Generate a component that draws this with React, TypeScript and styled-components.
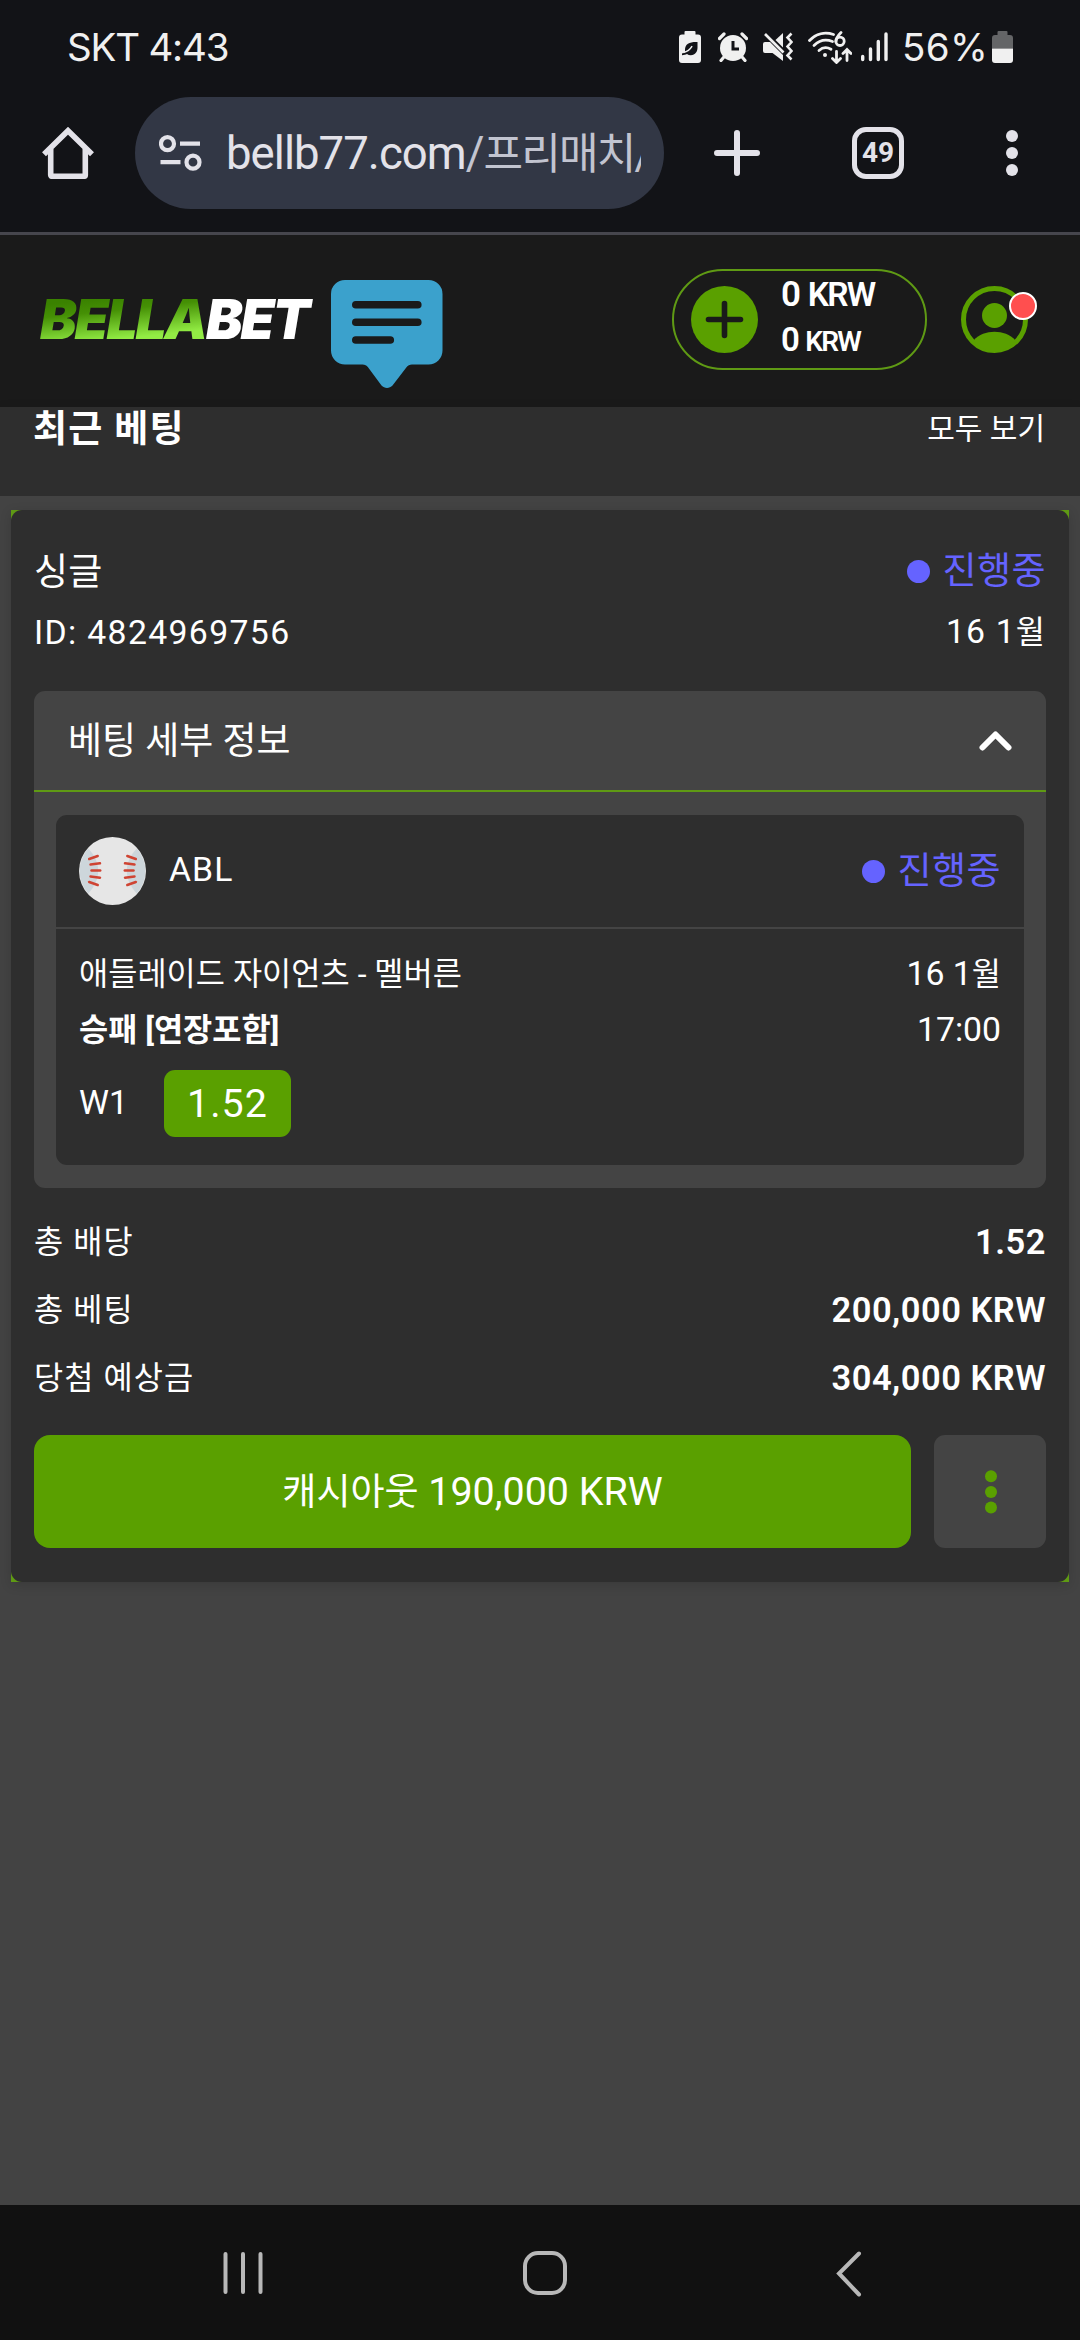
import React from "react";
import styled, { createGlobalStyle } from "styled-components";

const GREEN = "#5aa000";
const PANEL = "#2e2e2e";
const PANEL_LIGHT = "#444444";
const VIOLET = "#6563ff";

const GlobalStyle = createGlobalStyle`
  * { box-sizing: border-box; }
  body {
    margin: 0;
    background: #444444;
    color: #ffffff;
    font-family: Roboto, "Noto Sans CJK KR", sans-serif;
    font-size: 33.75px;
  }
  svg { display: block; flex: none; }
`;

const Screen = styled.div`
  width: 1080px;
  height: 2340px;
  display: flex;
  flex-direction: column;
  overflow: hidden;
`;

const Text = styled.span<{
  $size?: number;
  $track?: number;
  $weight?: number;
  $color?: string;
  $drop?: number;
}>`
  display: block;
  white-space: pre;
  padding-top: ${(p) => p.$drop ?? 0}px;
  font-size: ${(p) => p.$size ?? 33.75}px;
  letter-spacing: ${(p) => p.$track ?? 0}px;
  font-weight: ${(p) => p.$weight ?? 400};
  color: ${(p) => p.$color ?? "#ffffff"};
  line-height: 44px;
`;

const Ko = styled.span`
  font-size: 0.94em;
`;

/* ---------- phone status bar ---------- */

const StatusBar = styled.div`
  height: 94px;
  flex: none;
  display: flex;
  align-items: center;
  padding: 0 67px 0 67px;
  background: #121317;
`;

const StatusText = styled.span<{ $track: number }>`
  font-family: Inter, sans-serif;
  font-size: 38.5px;
  line-height: 46px;
  letter-spacing: ${(p) => p.$track}px;
  color: #f0f0f0;
  white-space: pre;
`;

const StatusIcons = styled.div`
  margin-left: auto;
  display: flex;
  align-items: center;
`;

const Spacer = styled.div<{ $w: number }>`
  width: ${(p) => p.$w}px;
  flex: none;
`;

/* ---------- browser toolbar ---------- */

const Toolbar = styled.div`
  height: 141px;
  flex: none;
  display: flex;
  align-items: flex-start;
  padding: 3px 0 0 42px;
  background: #121317;
  border-bottom: 3px solid #46464d;
`;

const ToolbarSlot = styled.div<{ $gap: number }>`
  height: 112px;
  display: flex;
  align-items: center;
  margin-left: ${(p) => p.$gap}px;
`;

const AddressPill = styled.div`
  width: 529px;
  height: 112px;
  margin-left: 41px;
  padding: 0 23px 0 24px;
  border-radius: 56px;
  background: #323745;
  display: flex;
  align-items: center;
`;

const Url = styled.div`
  flex: 1;
  margin-left: 24px;
  padding-top: 1px;
  overflow: hidden;
  white-space: pre;
  font-size: 45.5px;
  line-height: 60px;
  letter-spacing: -0.95px;
  color: #e3e2e9;
`;

const UrlPath = styled.span`
  color: #c2c4d0;
`;

const UrlHangul = styled.span`
  font-size: 43px;
  letter-spacing: -1.8px;
`;

const TabCount = styled.div`
  width: 52px;
  height: 52px;
  border: 5px solid #e3e2e9;
  border-radius: 14px;
  display: flex;
  align-items: center;
  justify-content: center;
  font-size: 28px;
  line-height: 30px;
  font-weight: 700;
  color: #e3e2e9;
`;

/* ---------- site header ---------- */

const SiteHeader = styled.header`
  height: 172px;
  flex: none;
  display: flex;
  padding-left: 40px;
  background: #1a1a1a;
`;

const Logo = styled.div`
  width: 291px;
  padding-top: 52px;
  display: flex;
  align-items: flex-start;
  font-family: Inter, sans-serif;
  font-size: 55px;
  line-height: 64px;
  font-weight: 900;
  font-style: italic;
  letter-spacing: -2.2px;
  white-space: pre;
`;

const LogoGreen = styled.span`
  background: linear-gradient(174deg, #3a8200 22%, #459005 38%, #92ec44 74%);
  background-clip: text;
  -webkit-background-clip: text;
  color: transparent;
`;

const LogoWhite = styled.span`
  color: #ffffff;
`;

const ChatButton = styled.div`
  padding-top: 45px;
`;

const Balance = styled.div`
  width: 255px;
  height: 101px;
  margin: 34px 0 0 229px;
  border: 2px solid #5f9a14;
  border-radius: 51px;
  display: flex;
  padding: 15px 0 0 17px;
`;

const Amounts = styled.div`
  margin: -14px 0 0 23px;
  display: flex;
  flex-direction: column;
`;

const Amount = styled.div<{ $digit: number; $unit: number; $track: number }>`
  height: 45px;
  line-height: 45px;
  font-weight: 600;
  white-space: pre;
  font-size: ${(p) => p.$unit}px;
  letter-spacing: ${(p) => p.$track}px;
  b {
    margin-right: 2px;
    font-weight: 600;
    font-size: ${(p) => p.$digit}px;
  }
`;

const Profile = styled.div`
  position: relative;
  height: 67px;
  margin: 51px 0 0 34px;
`;

const AlertDot = styled.i`
  position: absolute;
  left: 48px;
  top: 6px;
  width: 28px;
  height: 28px;
  border: 2.5px solid #ffffff;
  border-radius: 50%;
  background: #ff4f4f;
`;

/* ---------- recent bets ---------- */

const RecentBar = styled.div`
  height: 89px;
  flex: none;
  display: flex;
  justify-content: space-between;
  padding: 0 35px 0 33px;
  background: ${PANEL};
  box-shadow: 0 3px 11px rgba(0, 0, 0, 0.14);
`;

const Content = styled.main`
  flex: 1;
  padding: 14px 11px 0;
  background: #434343;
`;

const BetFrame = styled.div`
  height: 1072px;
  background: #5f9a14;
  box-shadow: 0 3px 11px rgba(0, 0, 0, 0.14);
`;

const BetCard = styled.div`
  height: 100%;
  padding: 38px 23px 0;
  border-radius: 11px;
  background: ${PANEL};
  display: flex;
  flex-direction: column;
`;

const Row = styled.div<{ $h: number }>`
  height: ${(p) => p.$h}px;
  flex: none;
  display: flex;
  align-items: center;
  justify-content: space-between;
`;

const Status = styled.div`
  display: flex;
  align-items: center;
  gap: 12px;
`;

const StatusDot = styled.i`
  width: 23px;
  height: 23px;
  border-radius: 50%;
  background: ${VIOLET};
`;

const Details = styled.section`
  height: 497px;
  flex: none;
  margin-top: 21px;
  border-radius: 11px;
  background: ${PANEL_LIGHT};
`;

const DetailsHead = styled.div`
  height: 101px;
  padding: 0 34px 0 34px;
  border-bottom: 2px solid #5f9a14;
  display: flex;
  align-items: center;
  justify-content: space-between;
`;

const Pick = styled.div`
  height: 350px;
  margin: 23px 22px 0;
  border-radius: 11px;
  background: ${PANEL};
`;

const PickHead = styled.div`
  height: 114px;
  padding: 0 23px;
  border-bottom: 2px solid ${PANEL_LIGHT};
  display: flex;
  align-items: center;
`;

const League = styled.div`
  flex: 1;
  margin-left: 23px;
  padding-bottom: 2px;
`;

const PickBody = styled.div`
  padding: 17px 23px 0;
`;

const Outcome = styled.div`
  display: flex;
  align-items: center;
  margin-top: 12px;
`;

const OutcomeName = styled.div`
  width: 85px;
  padding-bottom: 2px;
`;

const Odds = styled.div`
  width: 127px;
  height: 67px;
  border-radius: 11px;
  background: ${GREEN};
  display: flex;
  align-items: center;
  justify-content: center;
`;

const Totals = styled.div`
  margin-top: 20px;
`;

const Actions = styled.div`
  margin-top: 23px;
  display: flex;
  justify-content: space-between;
`;

const CashOut = styled.button`
  width: 877px;
  height: 113px;
  padding: 0;
  border: 0;
  border-radius: 16px;
  background: ${GREEN};
  font-family: inherit;
  display: flex;
  align-items: center;
  justify-content: center;
`;

const MoreButton = styled.button`
  width: 112px;
  height: 113px;
  padding: 0 0 0 2px;
  border: 0;
  border-radius: 11px;
  background: ${PANEL_LIGHT};
  display: flex;
  align-items: center;
  justify-content: center;
`;

/* ---------- system navigation ---------- */

const NavBar = styled.nav`
  height: 135px;
  flex: none;
  padding: 46px 0 0 223px;
  background: #111111;
  display: flex;
`;

/* ---------- icons ---------- */

const INK = "#f0f0f0";

const EcoBattery = () => (
  <svg width="22" height="32" viewBox="0 0 22 32">
    <path d="M6.500 0h9a1 1 0 0 1 1 1v2.500H19a3 3 0 0 1 3 3V29a3 3 0 0 1-3 3H3a3 3 0 0 1-3-3V6.500a3 3 0 0 1 3-3h2.500V1a1 1 0 0 1 1-1z" fill={INK} />
    <path d="M18.500 11c-7.500-.3-12.500 1.500-12.500 8 0 .8.100 1.600.3 2.200L3 22.500v1.700c2 0 3.600-.5 5-1.200 1 .8 2.300 1.200 3.800 1.200 4.600 0 6.700-3.700 6.700-7.700z" fill="#121317" />
    <path d="M4 23.200c4.200-.9 6.800-3.200 8.700-6.400" stroke={INK} strokeWidth="1.500" fill="none" transform="translate(.4 -1.600)" />
  </svg>
);

const Alarm = () => (
  <svg width="30" height="30" viewBox="0 0 30 30">
    <circle cx="15" cy="16" r="13" fill={INK} />
    <path d="M1.500 6.500l4.500-4.500M28.500 6.500l-4.500-4.500M5.500 25.500l-2.500 3M24.500 25.500l2.500 3" stroke={INK} strokeWidth="3.200" strokeLinecap="round" />
    <path d="M15 9v8h6" stroke="#121317" strokeWidth="3" fill="none" />
  </svg>
);

const Mute = () => (
  <svg width="30" height="30" viewBox="0 0 30 30">
    <path d="M0 12a2 2 0 0 1 2-2h5l13 13v6L9.500 21H2a2 2 0 0 1-2-2z" fill={INK} />
    <path d="M20 1v14.500L12.500 8z" fill={INK} />
    <path d="M2 2l18.500 18.500" stroke={INK} strokeWidth="2.600" />
    <path d="M28.500 1.500l-4 4 4 4.500-4 4.500 4 4.500-4 4.500 4 4" stroke={INK} strokeWidth="2.600" fill="none" />
  </svg>
);

const WifiSix = () => (
  <svg width="44" height="33" viewBox="0 0 44 33" fill="none" stroke={INK} strokeWidth="2.800" strokeLinecap="round">
    <path d="M1.500 9.500C8 2.500 17 .5 25.500 3.500" />
    <path d="M6 14.500c5-5 12-6.500 18.500-4" />
    <path d="M11 19.500c3.500-3.200 8-3.600 12-1.200" />
    <circle cx="17" cy="24" r="2" fill={INK} stroke="none" />
    <path d="M33 1.500c-3 3-5 5.500-5 9" />
    <circle cx="32" cy="10.300" r="4.200" />
    <path d="M28.500 20.500v10M24.500 27.500l4 4 4-4" />
    <path d="M39 29.500v-10M35 22.500l4-4 4 4" />
  </svg>
);

const Signal = () => (
  <svg width="27" height="30" viewBox="0 0 27 30" stroke={INK} strokeWidth="3.400" strokeLinecap="round">
    <path d="M1.700 24.500v3M9.500 17v10.500M17.300 9.500v18M25 2v25.500" />
  </svg>
);

const Battery = () => (
  <svg width="21" height="32" viewBox="0 0 21 32">
    <path d="M6.500 0h8a1 1 0 0 1 1 1v3H18a3 3 0 0 1 3 3v10.500H0V7a3 3 0 0 1 3-3h2.500V1a1 1 0 0 1 1-1z" fill="#646567" />
    <path d="M0 17.500h21V29a3 3 0 0 1-3 3H3a3 3 0 0 1-3-3z" fill={INK} />
  </svg>
);

const HomeIcon = () => (
  <svg width="52" height="52" viewBox="0 0 52 52" fill="none" stroke="#e3e2e9" strokeWidth="5.600">
    <path d="M2 27.200L26 3.700l24 23.500" strokeLinejoin="miter" />
    <path d="M8.700 22v26a1.300 1.300 0 0 0 1.300 1.300h32a1.300 1.300 0 0 0 1.300-1.300V22" />
  </svg>
);

const TuneIcon = () => (
  <svg width="43" height="36" viewBox="0 0 43 36" fill="none" stroke="#e3e2e9" strokeWidth="4.200">
    <circle cx="8.500" cy="8.700" r="6.500" />
    <path d="M21 8.700h20M1.500 27.200h20" />
    <circle cx="34" cy="27.200" r="6.500" />
  </svg>
);

const PlusIcon = () => (
  <svg width="46" height="46" viewBox="0 0 46 46" stroke="#e3e2e9" strokeWidth="6" strokeLinecap="round">
    <path d="M23 3v40M3 23h40" />
  </svg>
);

const MenuDots = () => (
  <svg width="12" height="48" viewBox="0 0 12 48" fill="#e3e2e9">
    <circle cx="6" cy="7" r="6" />
    <circle cx="6" cy="24" r="6" />
    <circle cx="6" cy="41" r="6" />
  </svg>
);

const ChatIcon = () => (
  <svg width="112" height="108" viewBox="0 0 112 108">
    <path d="M14 0h83.500a14 14 0 0 1 14 14v56.500a14 14 0 0 1-14 14H81c-2.500 0-4 .8-5.500 2.800L61.500 105.500c-3 3.300-8 3.300-11 0L37 87.300c-1.500-2-3-2.800-5.500-2.800H14a14 14 0 0 1-14-14V14A14 14 0 0 1 14 0z" fill="#3ba1cc" />
    <path d="M24.800 24.800h62M24.800 42.300h62M24.800 60h34.500" stroke="#1a1a1a" strokeWidth="7.600" strokeLinecap="round" />
  </svg>
);

const DepositIcon = () => (
  <svg width="67" height="67" viewBox="0 0 67 67">
    <circle cx="33.500" cy="33.500" r="33.500" fill={GREEN} />
    <path d="M33.500 17.500v32M17.500 33.500h32" stroke="#1a1a1a" strokeWidth="5.600" strokeLinecap="round" />
  </svg>
);

const UserIcon = () => (
  <svg width="67" height="67" viewBox="0 0 67 67">
    <circle cx="33.500" cy="33.500" r="31" fill="none" stroke={GREEN} strokeWidth="5" />
    <circle cx="33.500" cy="29.500" r="12.500" fill={GREEN} />
    <path d="M12.500 54.500C18 48.500 25.500 45.800 33.500 45.800S49 48.500 54.500 54.500C49 61 42 66 33.500 66S18 61 12.500 54.500z" fill={GREEN} />
  </svg>
);

const ChevronUp = () => (
  <svg width="33" height="22" viewBox="0 0 33 22">
    <path d="M3.500 17.500L16.500 4.500l13 13" stroke="#ffffff" strokeWidth="6" strokeLinecap="round" strokeLinejoin="round" fill="none" />
  </svg>
);

const stitches = [
  "M10.200 22l8.500-3",
  "M11.500 27.500l9.500-1.200",
  "M12.500 33.500h8.700",
  "M11.500 39.500l9.500 1.200",
  "M10.200 45l8.500 3",
];

const Seam = () => (
  <>
    <path d="M9.300 11.500C22.500 25.500 22.500 42 9.300 56.500A33.500 33.500 0 0 1 9.300 11.500z" fill="#cdd6db" />
    {stitches.map((d) => (
      <path key={d} d={d} stroke="#cf4433" strokeWidth="2.500" strokeLinecap="round" />
    ))}
  </>
);

const Baseball = () => (
  <svg width="67" height="68" viewBox="0 0 67 68">
    <ellipse cx="33.500" cy="34" rx="33.500" ry="34" fill="#e6e6e6" />
    <Seam />
    <g transform="translate(67 0) scale(-1 1)">
      <Seam />
    </g>
  </svg>
);

const MoreDots = () => (
  <svg width="12" height="44" viewBox="0 0 12 44" fill={GREEN}>
    <circle cx="6" cy="6.300" r="6" />
    <circle cx="6" cy="22" r="6" />
    <circle cx="6" cy="37.500" r="6" />
  </svg>
);

const RecentsIcon = () => (
  <svg width="40" height="44" viewBox="0 0 40 44" stroke="#b8b8b8" strokeWidth="4" strokeLinecap="round">
    <path d="M2.500 3v38M20 3v38M37.500 3v38" />
  </svg>
);

const NavHomeIcon = () => (
  <svg width="44" height="44" viewBox="0 0 44 44">
    <rect x="2" y="2" width="40" height="40" rx="13" fill="none" stroke="#b8b8b8" strokeWidth="4" />
  </svg>
);

const BackIcon = () => (
  <svg width="26" height="46" viewBox="0 0 26 46" fill="none" stroke="#b8b8b8" strokeWidth="4" strokeLinecap="round">
    <path d="M23 2.500L3 22.500l20 21" />
  </svg>
);

const InProgress = () => (
  <Status>
    <StatusDot />
    <Text $size={37} $drop={2} $track={0.5} $color={VIOLET}>진행중</Text>
  </Status>
);

const totals = [
  { label: "총 배당", value: "1.52" },
  { label: "총 베팅", value: "200,000 KRW" },
  { label: "당첨 예상금", value: "304,000 KRW" },
];

export default function App() {
  return (
    <Screen>
      <GlobalStyle />
      <StatusBar>
        <StatusText $track={-1.2}>SKT 4:43</StatusText>
        <StatusIcons>
          <EcoBattery />
          <Spacer $w={17} />
          <Alarm />
          <Spacer $w={15} />
          <Mute />
          <Spacer $w={15} />
          <WifiSix />
          <Spacer $w={9} />
          <Signal />
          <Spacer $w={14} />
          <StatusText $track={0.3}>56%</StatusText>
          <Spacer $w={4} />
          <Battery />
        </StatusIcons>
      </StatusBar>

      <Toolbar>
        <ToolbarSlot $gap={0}>
          <HomeIcon />
        </ToolbarSlot>
        <AddressPill>
          <TuneIcon />
          <Url>
            bellb77.com
            <UrlPath>
              /<UrlHangul>프리매치</UrlHangul>/
            </UrlPath>
          </Url>
        </AddressPill>
        <ToolbarSlot $gap={50}>
          <PlusIcon />
        </ToolbarSlot>
        <ToolbarSlot $gap={92}>
          <TabCount>49</TabCount>
        </ToolbarSlot>
        <ToolbarSlot $gap={102}>
          <MenuDots />
        </ToolbarSlot>
      </Toolbar>

      <SiteHeader>
        <Logo>
          <LogoGreen>BELLA</LogoGreen>
          <LogoWhite>BET</LogoWhite>
        </Logo>
        <ChatButton>
          <ChatIcon />
        </ChatButton>
        <Balance>
          <DepositIcon />
          <Amounts>
            <Amount $digit={35} $unit={33.5} $track={-1.8}>
              <b>0</b> KRW
            </Amount>
            <Amount $digit={33} $unit={28} $track={-1.8}>
              <b>0</b> KRW
            </Amount>
          </Amounts>
        </Balance>
        <Profile>
          <UserIcon />
          <AlertDot />
        </Profile>
      </SiteHeader>

      <RecentBar>
        <Text $size={37} $drop={1} $track={1.3} $weight={700}>최근 베팅</Text>
        <Text $size={30} $track={0}>모두 보기</Text>
      </RecentBar>

      <Content>
        <BetFrame>
          <BetCard>
            <Row $h={46}>
              <Text $size={37} $drop={3} $track={0.3}>싱글</Text>
              <InProgress />
            </Row>
            <Row $h={76}>
              <Text $drop={1} $track={1.35}>ID: 4824969756</Text>
              <Text $drop={1} $track={1.1}>16 1<Ko>월</Ko></Text>
            </Row>

            <Details>
              <DetailsHead>
                <Text $size={37} $drop={3} $track={0}>베팅 세부 정보</Text>
                <ChevronUp />
              </DetailsHead>
              <Pick>
                <PickHead>
                  <Baseball />
                  <League>
                    <Text $track={1.1}>ABL</Text>
                  </League>
                  <InProgress />
                </PickHead>
                <PickBody>
                  <Row $h={56}>
                    <Text $size={31.7} $drop={2} $track={0.05}>애들레이드 자이언츠 - 멜버른</Text>
                    <Text>16 1<Ko>월</Ko></Text>
                  </Row>
                  <Row $h={56}>
                    <Text $size={31.7} $drop={2} $weight={700}>승패 [연장포함]</Text>
                    <Text>17:00</Text>
                  </Row>
                  <Outcome>
                    <OutcomeName>
                      <Text>W1</Text>
                    </OutcomeName>
                    <Odds>
                      <Text $size={39.4} $drop={1} $track={1.1}>1.52</Text>
                    </Odds>
                  </Outcome>
                </PickBody>
              </Pick>
            </Details>

            <Totals>
              {totals.map((t) => (
                <Row $h={68} key={t.label}>
                  <Text $size={31.7} $drop={2} $track={1.1}>{t.label}</Text>
                  <Text $size={34.5} $track={0.5} $weight={600}>{t.value}</Text>
                </Row>
              ))}
            </Totals>

            <Actions>
              <CashOut>
                <Text $size={39.4} $drop={2}><Ko>캐시아웃</Ko> 190,000 KRW</Text>
              </CashOut>
              <MoreButton>
                <MoreDots />
              </MoreButton>
            </Actions>
          </BetCard>
        </BetFrame>
      </Content>

      <NavBar>
        <RecentsIcon />
        <Spacer $w={260} />
        <NavHomeIcon />
        <Spacer $w={269} />
        <BackIcon />
      </NavBar>
    </Screen>
  );
}
